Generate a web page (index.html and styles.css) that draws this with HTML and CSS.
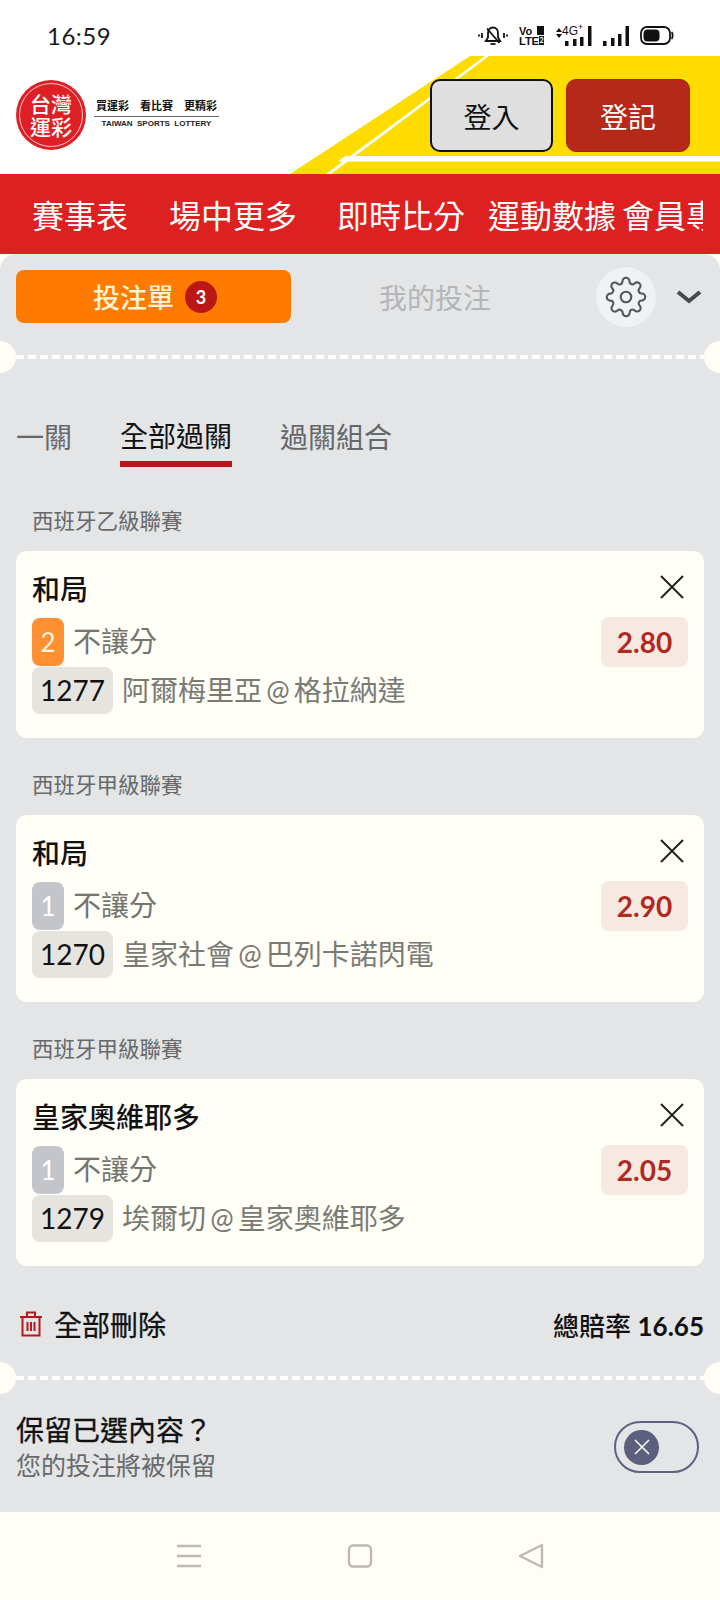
FILE: index.html
```html
<!DOCTYPE html>
<html lang="zh-Hant">
<head>
  <meta charset="UTF-8" />
  <meta name="viewport" content="width=device-width, initial-scale=1.0" />
  <title>台灣運彩 投注單</title>
  <link rel="stylesheet" href="styles.css">
</head>
<body>
  <!-- Barra de status -->
  <div class="status-bar">
    <span class="clock">16:59</span>
    <div class="status-icons">
      <svg class="ic-bell" width="30" height="22" viewBox="0 0 30 22" fill="none" stroke="#111" stroke-width="1.8">
        <path d="M15 2.5c-3.2 0-5 2.6-5 5.4v4.5L7.8 16h14.4L20 12.400V7.900c0-2.800-1.800-5.400-5-5.400z" />
        <path d="M12.500 19h5" />
        <path d="M9 3.500L21.500 18" />
        <path d="M4 8v5M1 9.500v2M26 8v5M29 9.500v2" />
      </svg>
      <div class="volte">
        <span>Vo<b class="sim-box"></b></span>
        <span>LTE<b class="sim-box sim-2">2</b></span>
      </div>
      <div class="net">
        <svg class="net-arrows" width="6" height="10" viewBox="0 0 6 10" fill="#111">
          <path d="M3 0l3 4H0zM3 10L0 6h6z" />
        </svg>
        <span class="net-label">4G<sup>+</sup></span>
        <svg width="27" height="20" viewBox="0 0 27 20" fill="#111">
          <rect x="0" y="15" width="3.500" height="5" />
          <rect x="8" y="13" width="3.500" height="7" />
          <rect x="15" y="11" width="3.500" height="9" />
          <rect x="23" y="0" width="3.500" height="20" />
        </svg>
      </div>
      <svg width="26" height="20" viewBox="0 0 26 20" fill="#111">
        <rect x="0" y="15" width="3.500" height="5" />
        <rect x="8" y="12" width="3.500" height="8" />
        <rect x="15" y="8" width="3.500" height="12" />
        <rect x="22.500" y="0" width="3.500" height="20" />
      </svg>
      <svg width="34" height="19" viewBox="0 0 34 19">
        <rect x="1" y="1" width="29" height="17" rx="6" fill="none" stroke="#111" stroke-width="1.800" />
        <path d="M31.500 6c1.500 1 1.500 6 0 7" fill="none" stroke="#111" stroke-width="1.800" />
        <rect x="3.500" y="3.500" width="16" height="12" rx="4" fill="#111" />
      </svg>
    </div>
  </div>

  <!-- Cabecalho -->
  <header class="site-header">
    <svg class="header-bg" width="720" height="118" viewBox="0 0 720 118">
      <polygon points="470,0 720,0 720,118 290,118" fill="#ffdc00" />
      <polygon points="485,0 489,0 331,118 326,118" fill="#fff" />
      <polygon points="345,100 720,100 720,105.500 338,105.500" fill="#fff" />
    </svg>
    <div class="logo">
      <div class="logo-seal">
        <div class="logo-ring">
          <span>台灣</span>
          <span>運彩</span>
        </div>
      </div>
      <div class="logo-text">
        <div class="slogan"><span>買運彩</span><span>看比賽</span><span>更精彩</span></div>
        <div class="slogan-en">TAIWAN&nbsp; SPORTS&nbsp; LOTTERY</div>
      </div>
    </div>
    <div class="auth-buttons">
      <button class="btn btn-login">登入</button>
      <button class="btn btn-register">登記</button>
    </div>
  </header>

  <!-- Menu -->
  <nav class="main-nav">
    <a>賽事表</a>
    <a class="nav-item-2">場中更多</a>
    <a class="nav-item-3">即時比分</a>
    <a class="nav-item-4">運動數據</a>
    <a class="nav-item-5">會員專區</a>
  </nav>

  <!-- Painel do bilhete -->
  <main class="slip">
    <div class="slip-top">
      <button class="slip-tab-active">投注單 <span class="count">3</span></button>
      <span class="slip-tab">我的投注</span>
      <div class="gear">
        <svg width="42" height="42" viewBox="0 0 24 24" fill="none" stroke="#55565a" stroke-width="1.200">
          <circle cx="12" cy="12" r="3" />
          <path d="M19.400 15a1.650 1.650 0 0 0 .33 1.820l.06.06a2 2 0 0 1 0 2.830 2 2 0 0 1-2.830 0l-.06-.06a1.650 1.650 0 0 0-1.820-.33 1.650 1.650 0 0 0-1 1.510V21a2 2 0 0 1-2 2 2 2 0 0 1-2-2v-.09A1.650 1.650 0 0 0 9 19.400a1.650 1.650 0 0 0-1.820.33l-.06.06a2 2 0 0 1-2.830 0 2 2 0 0 1 0-2.830l.06-.06a1.650 1.650 0 0 0 .33-1.820 1.650 1.650 0 0 0-1.510-1H3a2 2 0 0 1-2-2 2 2 0 0 1 2-2h.09A1.650 1.650 0 0 0 4.600 9a1.650 1.650 0 0 0-.33-1.820l-.06-.06a2 2 0 0 1 0-2.830 2 2 0 0 1 2.830 0l.06.06a1.650 1.650 0 0 0 1.820.33H9a1.650 1.650 0 0 0 1-1.510V3a2 2 0 0 1 2-2 2 2 0 0 1 2 2v.09a1.650 1.650 0 0 0 1 1.510 1.650 1.650 0 0 0 1.820-.33l.06-.06a2 2 0 0 1 2.830 0 2 2 0 0 1 0 2.830l-.06.06a1.650 1.650 0 0 0-.33 1.820V9a1.650 1.650 0 0 0 1.510 1H21a2 2 0 0 1 2 2 2 2 0 0 1-2 2h-.09a1.650 1.650 0 0 0-1.510 1z" />
        </svg>
      </div>
      <svg class="chevron" width="26" height="16" viewBox="0 0 26 16" fill="none" stroke="#48494d" stroke-width="4">
        <path d="M2 3l11 9 11-9" />
      </svg>
    </div>

    <div class="ticket-line"></div>

    <div class="tabs">
      <span class="tab">一關</span>
      <span class="tab tab-on">全部過關</span>
      <span class="tab">過關組合</span>
    </div>

    <section class="bet-group">
      <h3 class="league">西班牙乙級聯賽</h3>
      <div class="bet-card">
        <div class="bet-row bet-title">
          <strong>和局</strong>
          <svg width="28" height="28" viewBox="0 0 28 28" stroke="#222" stroke-width="2"><path d="M3 3l22 22M25 3L3 25" /></svg>
        </div>
        <div class="bet-row bet-market">
          <div class="market"><span class="pick pick-orange">2</span>不讓分</div>
          <span class="odds">2.80</span>
        </div>
        <div class="bet-match"><span class="game-no">1277</span>阿爾梅里亞 @ 格拉納達</div>
      </div>
    </section>

    <section class="bet-group">
      <h3 class="league">西班牙甲級聯賽</h3>
      <div class="bet-card">
        <div class="bet-row bet-title">
          <strong>和局</strong>
          <svg width="28" height="28" viewBox="0 0 28 28" stroke="#222" stroke-width="2"><path d="M3 3l22 22M25 3L3 25" /></svg>
        </div>
        <div class="bet-row bet-market">
          <div class="market"><span class="pick">1</span>不讓分</div>
          <span class="odds">2.90</span>
        </div>
        <div class="bet-match"><span class="game-no">1270</span>皇家社會 @ 巴列卡諾閃電</div>
      </div>
    </section>

    <section class="bet-group">
      <h3 class="league">西班牙甲級聯賽</h3>
      <div class="bet-card">
        <div class="bet-row bet-title">
          <strong>皇家奧維耶多</strong>
          <svg width="28" height="28" viewBox="0 0 28 28" stroke="#222" stroke-width="2"><path d="M3 3l22 22M25 3L3 25" /></svg>
        </div>
        <div class="bet-row bet-market">
          <div class="market"><span class="pick">1</span>不讓分</div>
          <span class="odds">2.05</span>
        </div>
        <div class="bet-match"><span class="game-no">1279</span>埃爾切 @ 皇家奧維耶多</div>
      </div>
    </section>

    <div class="totals">
      <div class="delete-all">
        <svg width="24" height="28" viewBox="0 0 24 28" fill="none" stroke="#b9161c" stroke-width="2">
          <path d="M1 7h22M8 7V2.500h8V7M3.500 7v18.500h17V7M8.500 12v9M12 12v9M15.500 12v9" />
        </svg>
        全部刪除
      </div>
      <div class="total-odds">總賠率 <span>16.65</span></div>
    </div>

    <div class="ticket-line"></div>

    <div class="keep-row">
      <div>
        <div class="keep-title">保留已選內容？</div>
        <div class="keep-sub">您的投注將被保留</div>
      </div>
      <div class="toggle">
        <div class="toggle-knob">
          <svg width="18" height="18" viewBox="0 0 18 18" stroke="#fff" stroke-width="1.500"><path d="M2 2l14 14M16 2L2 16" /></svg>
        </div>
      </div>
    </div>
  </main>

  <!-- Navegacao do sistema -->
  <footer class="sys-nav">
    <svg width="26" height="24" viewBox="0 0 26 24" stroke="#bbbbb6" stroke-width="2.400"><path d="M1 2h24M1 12h24M1 22h24" /></svg>
    <svg width="26" height="24" viewBox="0 0 26 24" fill="none" stroke="#bbbbb6" stroke-width="2.400"><rect x="2" y="1.500" width="22" height="21" rx="4" /></svg>
    <svg width="26" height="26" viewBox="0 0 26 26" fill="none" stroke="#bbbbb6" stroke-width="2.400" stroke-linejoin="round"><path d="M24 2v22L2 13z" /></svg>
  </footer>
</body>
</html>
```

FILE: styles.css
```css
/* Reset */
* {
  box-sizing: border-box;
  margin: 0;
  padding: 0;
  font-family: Lato, 'Noto Sans CJK TC', sans-serif;
}

body {
  width: 720px;
  height: 1600px;
  overflow: hidden;
  background: #fffdf6;
  color: #111;
}

/* Status */
.status-bar {
  height: 56px;
  padding: 15px 46px 0 47px;
  display: flex;
  justify-content: space-between;
  align-items: center;
  background: #fff;
}

.clock {
  font-size: 24px;
  color: #1a1a1a;
  letter-spacing: 0.5px;
}

.status-icons {
  display: flex;
  align-items: center;
  gap: 11px;
}

.volte {
  display: flex;
  flex-direction: column;
  font-size: 11px;
  line-height: 10px;
  font-weight: 900;
  font-family: 'Liberation Sans', sans-serif;
  letter-spacing: 0;
}

.volte span {
  display: flex;
  align-items: center;
  justify-content: space-between;
  width: 25px;
  font-family: 'Liberation Sans', sans-serif;
}

.sim-box {
  width: 7px;
  height: 9px;
  background: #111;
  color: #fff;
  font-size: 7px;
  line-height: 9px;
  text-align: center;
}

.net {
  display: flex;
  align-items: flex-end;
  position: relative;
  padding-left: 10px;
}

.net-arrows {
  position: absolute;
  left: 1px;
  top: 2px;
}

.net-label {
  position: absolute;
  left: 7px;
  top: -1px;
  font-size: 12px;
  line-height: 12px;
  font-family: 'Liberation Sans', sans-serif;
  background: #fff;
  padding-right: 1px;
}

.net-label sup {
  font-size: 9px;
  line-height: 0;
  font-family: 'Liberation Sans', sans-serif;
}

/* Cabecalho */
.site-header {
  position: relative;
  height: 118px;
  display: flex;
  justify-content: space-between;
  align-items: flex-start;
  background: #fff;
  padding: 23px 30px 0 16px;
}

.header-bg {
  position: absolute;
  left: 0;
  top: 0;
}

.logo {
  position: relative;
  display: flex;
  align-items: center;
  gap: 8px;
  margin-top: 1px;
}

.logo-seal {
  width: 70px;
  height: 70px;
  border-radius: 50%;
  background: #de1f26;
  padding: 3px;
}

.logo-ring {
  width: 64px;
  height: 64px;
  border-radius: 50%;
  border: 1px solid #f6c9c9;
  display: flex;
  flex-direction: column;
  align-items: center;
  justify-content: center;
  color: #fff;
  font-size: 21px;
  line-height: 23px;
  font-weight: 500;
}

.logo-text {
  width: 125px;
}

.slogan {
  display: flex;
  justify-content: space-between;
  padding: 0 2px;
  font-size: 11px;
  line-height: 14px;
  font-weight: 700;
  border-bottom: 1px solid #666;
  padding-bottom: 3px;
}

.slogan-en {
  font-size: 8px;
  line-height: 14px;
  text-align: center;
  font-weight: 700;
  font-family: 'Liberation Sans', sans-serif;
  color: #222;
}

.auth-buttons {
  position: relative;
  display: flex;
  gap: 13px;
}

.btn {
  width: 124px;
  height: 73px;
  border-radius: 10px;
  font-size: 28px;
}

.btn-login {
  width: 123px;
  background: #dfdfdf;
  border: 2px solid #111;
  color: #111;
}

.btn-register {
  background: #b62818;
  border: 1px solid #a8200f;
  color: #fff;
}

/* Menu */
.main-nav {
  height: 80px;
  background: #dd2020;
  display: flex;
  align-items: center;
  padding-left: 32px;
  overflow: hidden;
  white-space: nowrap;
  border-right: 17px solid #dd2020;
}

.main-nav a {
  color: #fff;
  font-size: 32px;
  flex: none;
}

.nav-item-2 { margin-left: 41px; }
.nav-item-3 { margin-left: 40px; }
.nav-item-4 { margin-left: 23px; }
.nav-item-5 { margin-left: 6px; }

/* Painel */
.slip {
  height: 1258px;
  background: #e3e5e7;
  border-radius: 16px 16px 0 0;
  overflow: hidden;
  padding-top: 16px;
}

.slip-top {
  display: flex;
  align-items: center;
  height: 53px;
  padding-left: 16px;
}

.slip-tab-active {
  width: 275px;
  height: 53px;
  background: #ff7b00;
  border: none;
  border-radius: 8px;
  color: #fff4d8;
  font-size: 27px;
  font-weight: 500;
  display: flex;
  align-items: center;
  justify-content: center;
  gap: 11px;
  padding-left: 3px;
}

.count {
  width: 32px;
  height: 32px;
  border-radius: 50%;
  background: #bb1717;
  color: #fff;
  font-size: 18px;
  font-weight: 700;
  line-height: 32px;
  text-align: center;
}

.slip-tab {
  margin-left: 88px;
  font-size: 28px;
  color: #b4b5b7;
}

.gear {
  margin-left: 105px;
  width: 60px;
  height: 60px;
  border-radius: 50%;
  background: #eff1f3;
  display: flex;
  align-items: center;
  justify-content: center;
  flex: none;
}

.chevron {
  margin-left: 20px;
}

/* Linha picotada do bilhete */
.ticket-line {
  position: relative;
  height: 4px;
  margin: 32px 16px 0;
  background: repeating-linear-gradient(to right, #fff 0, #fff 8px, transparent 8px, transparent 12px);
}

.ticket-line::before,
.ticket-line::after {
  content: "";
  position: absolute;
  top: -14px;
  width: 32px;
  height: 32px;
  border-radius: 50%;
  background: #fffdf6;
}

.ticket-line::before { left: -32px; }
.ticket-line::after { right: -32px; }

/* Abas */
.tabs {
  display: flex;
  gap: 48px;
  padding: 59px 0 0 16px;
  height: 115px;
}

.tab {
  font-size: 28px;
  line-height: 38px;
  height: 50px;
  color: #66676a;
}

.tab-on {
  color: #111;
  position: relative;
  top: -1px;
  border-bottom: 6px solid #b8141c;
  padding-bottom: 2px;
}

/* Apostas */
.bet-group {
  height: 264px;
  padding: 0 16px;
}

.league {
  height: 77px;
  padding: 31px 0 0 16px;
  font-size: 21.500px;
  line-height: 32px;
  font-weight: 400;
  color: #67686a;
}

.bet-card {
  height: 187px;
  background: #fffef7;
  border-radius: 10px;
  padding: 17px 16px 0;
}

.bet-row {
  display: flex;
  justify-content: space-between;
  align-items: center;
}

.bet-title {
  height: 40px;
  padding-right: 2px;
  margin-bottom: 9px;
}

.bet-title strong {
  font-size: 28px;
  font-weight: 500;
  color: #111;
}

.bet-title svg {
  margin-top: -2px;
}

.bet-market {
  height: 50px;
  align-items: flex-start;
}

.market {
  display: flex;
  align-items: center;
  font-size: 28px;
  line-height: 49px;
  color: #74746e;
}

.pick {
  width: 32px;
  height: 48px;
  border-radius: 8px;
  background: #c4c5ca;
  color: #fff;
  font-size: 26px;
  line-height: 48px;
  text-align: center;
  margin-right: 9px;
}

.pick-orange {
  background: #ff8f33;
  color: #fff5dc;
}

.odds {
  width: 87px;
  height: 50px;
  border-radius: 8px;
  background: #f7e8e1;
  color: #b02a24;
  font-size: 28px;
  font-weight: 700;
  line-height: 50px;
  text-align: center;
}

.bet-match {
  display: flex;
  align-items: center;
  font-size: 28px;
  line-height: 47px;
  word-spacing: -3px;
  color: #7a7a74;
  white-space: nowrap;
}

.game-no {
  width: 81px;
  height: 47px;
  border-radius: 8px;
  background: #e6e4df;
  color: #111;
  font-size: 28px;
  line-height: 47px;
  text-align: center;
  margin-right: 9px;
}

/* Total */
.totals {
  display: flex;
  justify-content: space-between;
  align-items: center;
  padding: 0 16px;
  height: 40px;
  margin-top: 38px;
}

.delete-all {
  display: flex;
  align-items: center;
  gap: 11px;
  padding-left: 3px;
  font-size: 28px;
  -webkit-text-stroke: 0.3px #111;
}

.total-odds {
  font-size: 26px;
  font-weight: 500;
}

.total-odds span {
  font-weight: 700;
}

.keep-row {
  display: flex;
  justify-content: space-between;
  align-items: center;
  padding: 0 21px 0 16px;
  margin-top: 32px;
}

.keep-title {
  font-size: 28px;
  line-height: 36px;
  -webkit-text-stroke: 0.3px #111;
}

.keep-sub {
  font-size: 25px;
  line-height: 34px;
  color: #68696b;
}

.toggle {
  width: 85px;
  height: 52px;
  border: 2px solid #5f6180;
  border-radius: 26px;
  display: flex;
  align-items: center;
  padding-left: 8px;
}

.toggle-knob {
  width: 35px;
  height: 35px;
  border-radius: 50%;
  background: #5d5f7f;
  display: flex;
  align-items: center;
  justify-content: center;
}

/* Navegacao do sistema */
.sys-nav {
  height: 88px;
  display: flex;
  justify-content: center;
  align-items: center;
  gap: 145px;
  padding: 0 0 1px 0;
  background: #fffdf6;
}
```
